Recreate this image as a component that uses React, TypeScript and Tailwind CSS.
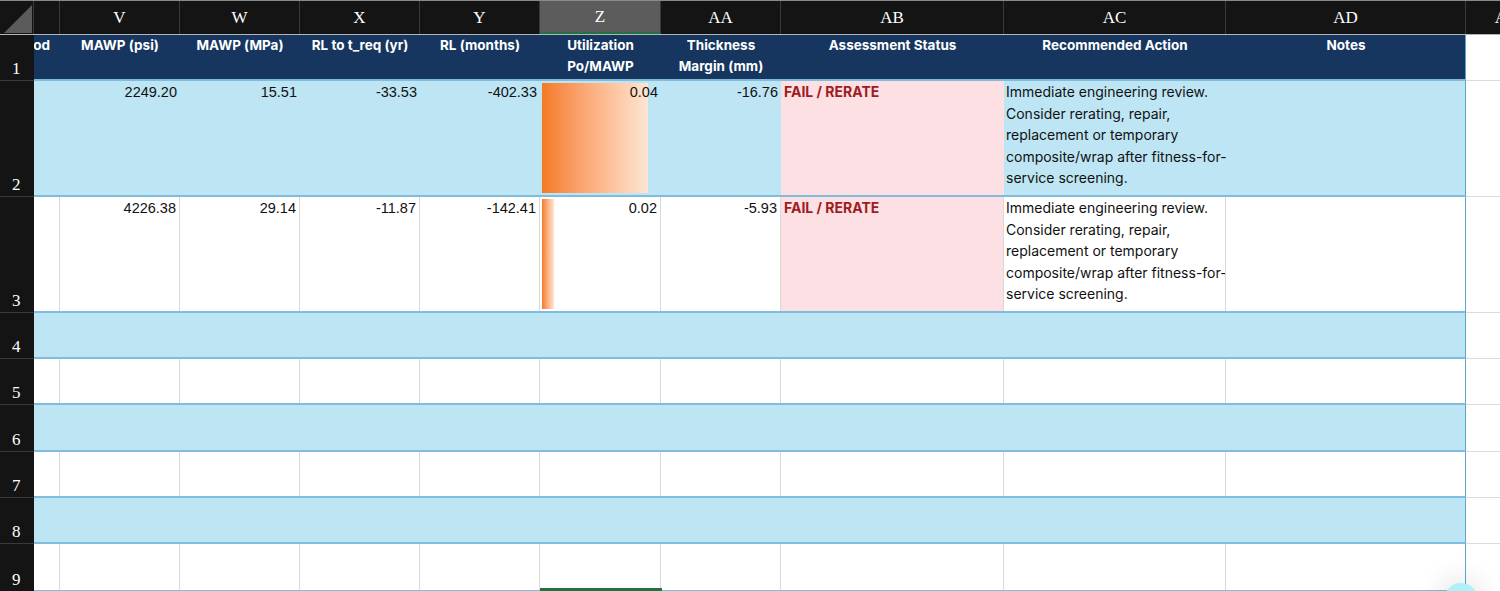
import React from 'react';

type Col = { key: string; w: string };

const cols: Col[] = [
  { key: 'U', w: 'w-[26px]' },
  { key: 'V', w: 'w-[120px]' },
  { key: 'W', w: 'w-[120px]' },
  { key: 'X', w: 'w-[120px]' },
  { key: 'Y', w: 'w-[120px]' },
  { key: 'Z', w: 'w-[121px]' },
  { key: 'AA', w: 'w-[120px]' },
  { key: 'AB', w: 'w-[223px]' },
  { key: 'AC', w: 'w-[222px]' },
  { key: 'AD', w: 'w-[240px]' },
];

const serif = { fontFamily: '"Liberation Serif", "Times New Roman", serif' };
const sans = { fontFamily: 'Inter, "Noto Sans", sans-serif' };
const num = { fontFamily: '"Liberation Sans", Arial, sans-serif' };

function RowHead({ n }: { n: number }) {
  return (
    <div
      className="w-[34px] h-full shrink-0 bg-[#141414] border-b border-[#3a3a3a] flex items-end pl-[12px] pb-[1px] text-white text-[17px] leading-[20px]"
      style={serif}
    >
      {n}
    </div>
  );
}

function Row({
  n,
  h,
  bg,
  grid,
  cells,
}: {
  n: number;
  h: string;
  bg: string;
  grid: boolean;
  cells?: Record<string, React.ReactNode>;
}) {
  return (
    <div className={`flex ${h}`}>
      <RowHead n={n} />
      <div className={`flex w-[1432px] h-full shrink-0 border-b-2 border-r border-b-[#80bcdc] border-r-[#5ba6cf] ${bg}`}>
        {cols.map((c, i) => {
          const last = i === cols.length - 1;
          const content = cells?.[c.key];
          return (
            <div
              key={c.key}
              className={`${c.w} h-full shrink-0 overflow-hidden ${grid && !last ? 'border-r border-[#d9d9d9]' : ''}`}
            >
              {content}
            </div>
          );
        })}
      </div>
      <div className="w-[80px] h-full shrink-0 bg-white border-b border-[#dcdcdc]" />
    </div>
  );
}

function Num({ v }: { v: string }) {
  return (
    <div className="h-full text-right pr-[3px] pt-[1px] text-[14.5px] leading-[20px] text-[#111]" style={num}>
      {v}
    </div>
  );
}

function Bar({ width, v }: { width: string; v: string }) {
  return (
    <div className="relative h-full">
      <div className={`absolute left-[2px] top-[2px] bottom-[2px] ${width} bg-linear-to-r from-[#f47a1f] to-[#fde6d3]`} />
      <div className="relative text-right pr-[3px] pt-[1px] text-[14.5px] leading-[20px] text-[#111]" style={num}>
        {v}
      </div>
    </div>
  );
}

function Fail() {
  return (
    <div className="h-full bg-[#fde0e4] pl-[3px] pt-[1px] text-[14px] leading-[20px] font-bold text-[#9e1c22]" style={sans}>
      FAIL / RERATE
    </div>
  );
}

function Action() {
  return (
    <div className="h-full pl-[2px] pt-0 text-[14px] leading-[21.6px] text-[#111] whitespace-nowrap" style={sans}>
      Immediate engineering review.
      <br />
      Consider rerating, repair,
      <br />
      replacement or temporary
      <br />
      composite/wrap after fitness-for-
      <br />
      service screening.
    </div>
  );
}

function HeadText({ children }: { children: React.ReactNode }) {
  return (
    <div className="h-full text-center pt-0 text-[13.5px] leading-[21px] font-bold text-white whitespace-nowrap" style={sans}>
      {children}
    </div>
  );
}

export default function App() {
  return (
    <div className="relative w-[1500px] h-[591px] overflow-hidden bg-white">
      {/* column letters */}
      <div className="flex h-[35px] bg-[#141414] border-t border-t-[#8a8a8a] border-b border-b-[#b5b5b5]">
        <div className="w-[34px] h-full shrink-0 border-r border-[#3a3a3a] flex items-end justify-end pr-[1px] pb-[1px]">
          <svg width="28" height="28" viewBox="0 0 28 28">
            <polygon points="28,0 28,28 0,28" fill="#5a5a5a" />
          </svg>
        </div>
        {cols.map((c) => (
          <div
            key={c.key}
            className={`${c.w} h-full shrink-0 flex items-center justify-center text-white text-[17px] border-r border-[#3a3a3a] ${
              c.key === 'Z' ? 'bg-[#5c5c5c] border-b-2 border-b-[#217346]' : ''
            }`}
            style={serif}
          >
            {c.key === 'U' ? '' : c.key}
          </div>
        ))}
        <div className="w-[80px] h-full shrink-0 flex items-center justify-center text-white text-[17px]" style={serif}>
          AE
        </div>
      </div>

      <Row
        n={1}
        h="h-[46px]"
        bg="bg-[#163660]"
        grid={false}
        cells={{
          U: (
            <div className="h-full flex justify-end pr-[10px] pt-0 text-[13.5px] leading-[21px] font-bold text-white whitespace-nowrap" style={sans}>
              Method
            </div>
          ),
          V: <HeadText>MAWP (psi)</HeadText>,
          W: <HeadText>MAWP (MPa)</HeadText>,
          X: <HeadText>RL to t_req (yr)</HeadText>,
          Y: <HeadText>RL (months)</HeadText>,
          Z: (
            <HeadText>
              Utilization
              <br />
              Po/MAWP
            </HeadText>
          ),
          AA: (
            <HeadText>
              Thickness
              <br />
              Margin (mm)
            </HeadText>
          ),
          AB: <HeadText>Assessment Status</HeadText>,
          AC: <HeadText>Recommended Action</HeadText>,
          AD: <HeadText>Notes</HeadText>,
        }}
      />

      <Row
        n={2}
        h="h-[116px]"
        bg="bg-[#bee5f4]"
        grid={false}
        cells={{
          V: <Num v="2249.20" />,
          W: <Num v="15.51" />,
          X: <Num v="-33.53" />,
          Y: <Num v="-402.33" />,
          Z: <Bar width="w-[106px]" v="0.04" />,
          AA: <Num v="-16.76" />,
          AB: <Fail />,
          AC: <Action />,
        }}
      />

      <Row
        n={3}
        h="h-[116px]"
        bg="bg-white"
        grid
        cells={{
          V: <Num v="4226.38" />,
          W: <Num v="29.14" />,
          X: <Num v="-11.87" />,
          Y: <Num v="-142.41" />,
          Z: <Bar width="w-[12px]" v="0.02" />,
          AA: <Num v="-5.93" />,
          AB: <Fail />,
          AC: <Action />,
        }}
      />

      <Row n={4} h="h-[46px]" bg="bg-[#bee5f4]" grid={false} />
      <Row n={5} h="h-[46px]" bg="bg-white" grid />
      <Row n={6} h="h-[47px]" bg="bg-[#bee5f4]" grid={false} />
      <Row n={7} h="h-[46px]" bg="bg-white" grid />
      <Row n={8} h="h-[46px]" bg="bg-[#bee5f4]" grid={false} />
      <Row n={9} h="h-[48px]" bg="bg-white" grid />

      {/* selected cell marker */}
      <div className="absolute left-[540px] top-[588px] w-[122px] h-[3px] bg-[#217346]" />

      {/* floating button peeking in */}
      <div className="absolute left-[1444px] top-[583px] w-[34px] h-[34px] rounded-full bg-[#aef1f8] shadow-[0_0_24px_8px_rgba(0,0,0,0.08)]" />
    </div>
  );
}
